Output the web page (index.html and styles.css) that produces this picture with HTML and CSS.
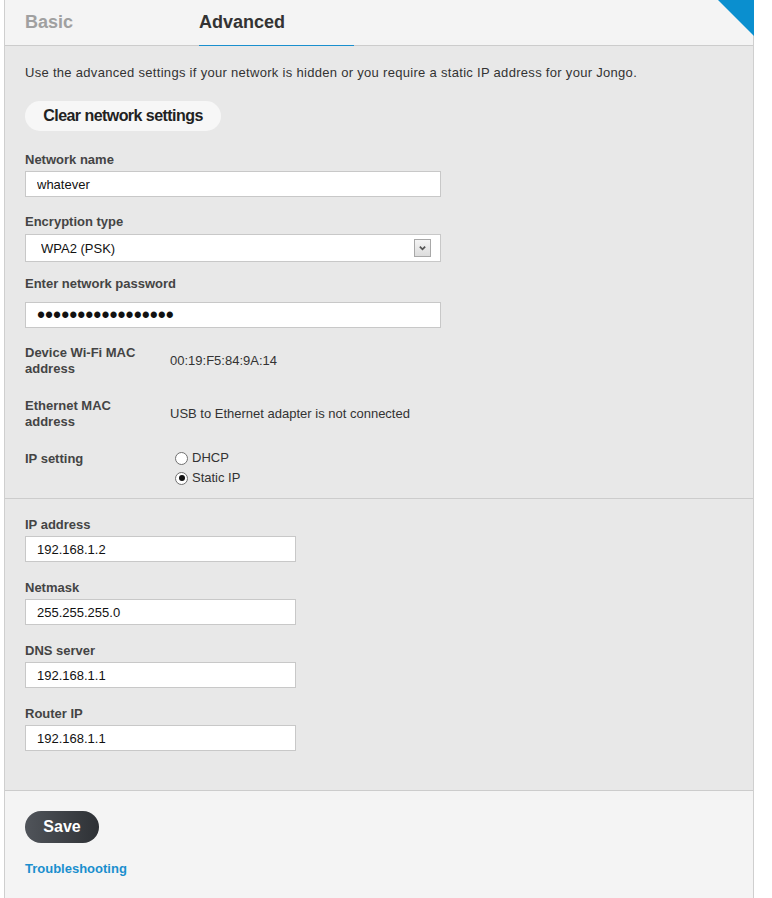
FILE: index.html
```html
<!DOCTYPE html>
<html lang="en">
<head>
<meta charset="utf-8">
<title>Advanced network settings</title>
<link rel="stylesheet" href="styles.css">
</head>
<body>
<div class="panel">
  <div class="tabs">
    <a class="tab">Basic</a>
    <a class="tab active">Advanced</a>
    <span class="corner"></span>
  </div>

  <div class="section main">
    <p class="desc">Use the advanced settings if your network is hidden or you require a static IP address for your Jongo.</p>
    <button class="btn-light" type="button">Clear network settings</button>

    <div class="field f-name">
      <label class="label">Network name</label>
      <input class="text wide" type="text" value="whatever">
    </div>

    <div class="field f-enc">
      <label class="label">Encryption type</label>
      <div class="select-wrap">
        <select class="select">
          <option>WPA2 (PSK)</option>
        </select>
        <span class="select-arrow">
          <svg width="17" height="18" viewBox="0 0 17 18"><polyline points="5.5,7.5 8.5,10.5 11.5,7.5" fill="none" stroke="#555" stroke-width="2"/></svg>
        </span>
      </div>
    </div>

    <div class="field f-pass">
      <label class="label">Enter network password</label>
      <input class="text wide pass" type="password" value="abcdefghijklmnopq">
    </div>

    <div class="info-row r-wifi">
      <div class="info-label">Device Wi-Fi MAC address</div>
      <div class="info-value">00:19:F5:84:9A:14</div>
    </div>

    <div class="info-row r-eth">
      <div class="info-label">Ethernet MAC address</div>
      <div class="info-value">USB to Ethernet adapter is not connected</div>
    </div>

    <div class="info-row r-ip">
      <div class="info-label ip-label">IP setting</div>
      <div class="radios">
        <label class="radio"><input type="radio" name="ip"><span>DHCP</span></label>
        <label class="radio"><input type="radio" name="ip" checked><span>Static IP</span></label>
      </div>
    </div>
  </div>

  <div class="section ipsec">
    <div class="field first">
      <label class="label">IP address</label>
      <input class="text short" type="text" value="192.168.1.2">
    </div>
    <div class="field">
      <label class="label">Netmask</label>
      <input class="text short" type="text" value="255.255.255.0">
    </div>
    <div class="field">
      <label class="label">DNS server</label>
      <input class="text short" type="text" value="192.168.1.1">
    </div>
    <div class="field">
      <label class="label">Router IP</label>
      <input class="text short" type="text" value="192.168.1.1">
    </div>
  </div>

  <div class="footer">
    <button class="btn-dark" type="button">Save</button>
    <a class="link">Troubleshooting</a>
  </div>
</div>
</body>
</html>
```

FILE: styles.css
```css
* { box-sizing: border-box; }

html, body {
  margin: 0;
  padding: 0;
  background: #ffffff;
}

body {
  font-family: "Liberation Sans", Arial, sans-serif;
  font-size: 13px;
  line-height: 16px;
  color: #333;
}

.panel {
  position: relative;
  margin-left: 4px;
  width: 750px;
  border-left: 1px solid #cfcfcf;
  border-right: 1px solid #cfcfcf;
  background: #f4f4f4;
}

/* tabs */
.tabs {
  display: flex;
  height: 46px;
  padding-left: 20px;
  background: #f4f4f4;
  border-bottom: 1px solid #cccccc;
}

.tab {
  display: block;
  font-size: 18px;
  font-weight: bold;
  line-height: 44px;
  color: #a0a0a0;
  text-decoration: none;
}

.tab:first-child { width: 174px; }

.tab.active {
  width: 155px;
  color: #333;
  border-bottom: 1px solid #1a8fce;
  margin-bottom: -1px;
}

.corner {
  position: absolute;
  top: 0;
  right: -1px;
  width: 0;
  height: 0;
  border-top: 36px solid #0a8fcf;
  border-left: 36px solid transparent;
}

/* sections */
.section {
  background: #e8e8e8;
  padding: 0 20px;
}

.main {
  padding-top: 19px;
  padding-bottom: 10px;
  border-bottom: 1px solid #cccccc;
}

.desc {
  margin: 0;
  color: #333;
  letter-spacing: 0.3px;
}

.btn-light {
  display: block;
  margin-top: 20px;
  width: 196px;
  height: 30px;
  padding: 0;
  border: none;
  border-radius: 15px;
  background: #f7f7f7;
  font-family: "Liberation Sans", Arial, sans-serif;
  font-size: 16px;
  font-weight: bold;
  letter-spacing: -0.55px;
  color: #222;
}

.field { margin-top: 18px; }
.f-name { margin-top: 21px; }
.f-enc { margin-top: 17px; }
.f-pass { margin-top: 14px; }

.label {
  display: block;
  font-weight: bold;
  color: #444;
  margin-bottom: 3px;
}

.text {
  display: block;
  height: 26px;
  border: 1px solid #c8c8c8;
  background: #fff;
  padding: 0 11px;
  font-family: "Liberation Sans", Arial, sans-serif;
  font-size: 13px;
  color: #111;
  outline: none;
}

.wide { width: 416px; }
.short { width: 271px; }

.pass {
  margin-top: 10px;
  font-size: 23px;
  letter-spacing: 0;
  padding-left: 11px;
}

.select-wrap {
  position: relative;
  width: 416px;
  margin-top: 4px;
}

.select {
  display: block;
  width: 416px;
  height: 28px;
  border: 1px solid #c8c8c8;
  background: #fff;
  padding: 0 0 0 15px;
  font-family: "Liberation Sans", Arial, sans-serif;
  font-size: 13px;
  color: #111;
  appearance: none;
  -webkit-appearance: none;
  border-radius: 0;
  outline: none;
}

.select-arrow {
  position: absolute;
  top: 5px;
  right: 10px;
  width: 17px;
  height: 18px;
  border: 1px solid #a8a8a8;
  background: linear-gradient(#f4f4f4, #dcdcdc);
  display: flex;
  align-items: center;
  justify-content: center;
  pointer-events: none;
}

.select-arrow svg { display: block; }

/* info rows */
.info-row {
  display: flex;
  gap: 15px;
}

.r-wifi { margin-top: 17px; }
.r-eth { margin-top: 21px; }
.r-ip { margin-top: 18px; }

.info-label {
  width: 130px;
  font-weight: bold;
  color: #444;
}

.ip-label { padding-top: 3px; }

.info-value {
  align-self: center;
  color: #333;
}

.radios {
  display: flex;
  flex-direction: column;
}

.radio {
  display: flex;
  align-items: center;
  height: 20px;
  color: #333;
}

.radio input {
  appearance: none;
  -webkit-appearance: none;
  margin: 0 4px 0 5px;
  width: 13px;
  height: 13px;
  border: 1px solid #707070;
  border-radius: 50%;
  background: #fff;
  position: relative;
}

.radio input:checked::after {
  content: "";
  position: absolute;
  left: 2.5px;
  top: 2.5px;
  width: 6px;
  height: 6px;
  border-radius: 50%;
  background: #111;
}

/* IP section */
.ipsec {
  padding-top: 18px;
  padding-bottom: 39px;
  border-bottom: 1px solid #cccccc;
}

.ipsec .field.first { margin-top: 0; }

/* footer */
.footer {
  background: #f4f4f4;
  padding: 20px 20px 30px;
}

.btn-dark {
  display: block;
  width: 74px;
  height: 32px;
  padding: 0;
  border: none;
  border-radius: 16px;
  background: linear-gradient(to right, #50545a, #2e3135);
  color: #fff;
  font-family: "Liberation Sans", Arial, sans-serif;
  font-size: 16px;
  font-weight: bold;
}

.link {
  display: block;
  margin-top: 18px;
  font-weight: bold;
  color: #1a8fce;
  text-decoration: none;
}
```
